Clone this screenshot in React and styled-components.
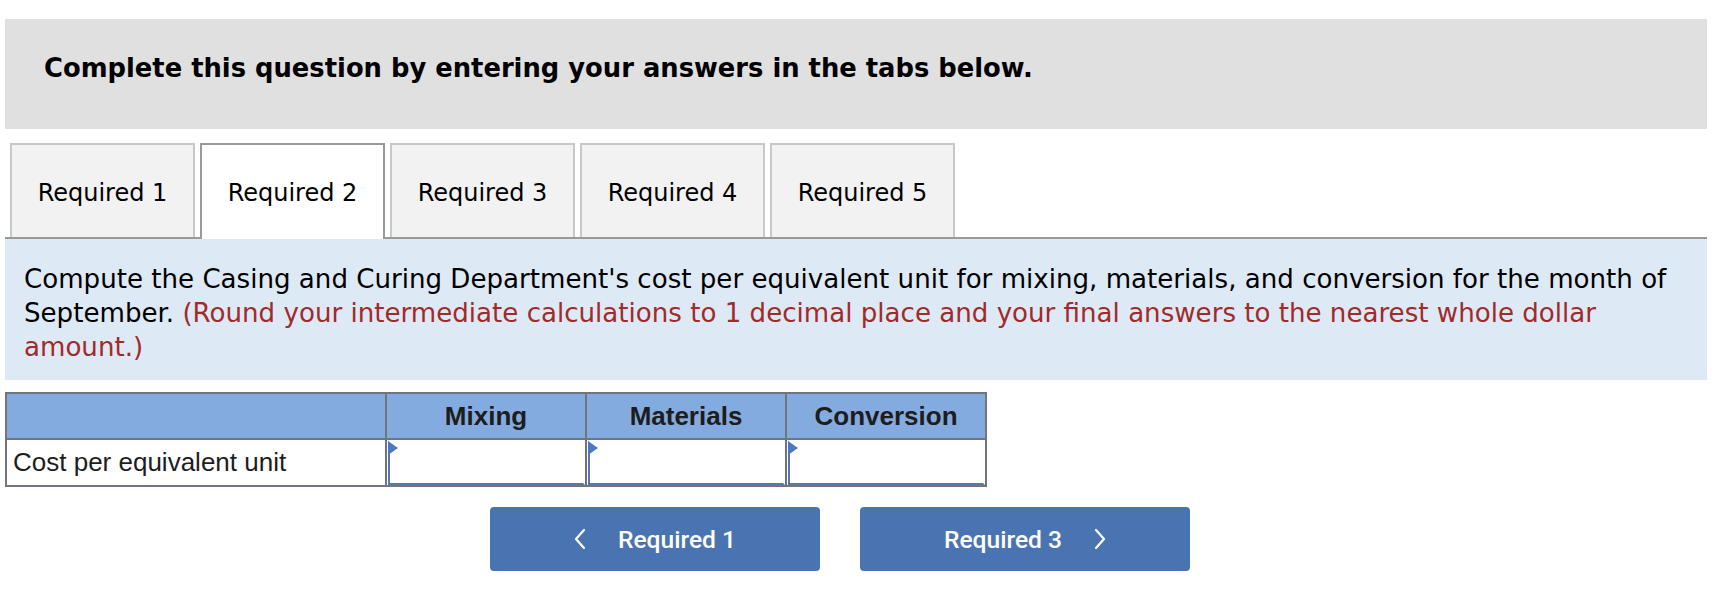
import React from "react";
import styled, { createGlobalStyle } from "styled-components";

const GlobalStyle = createGlobalStyle`
  html, body {
    margin: 0;
    padding: 0;
    background: #ffffff;
  }
  body {
    font-family: "DejaVu Sans", Verdana, sans-serif;
    color: #000;
  }
`;

const tabs = ["Required 1", "Required 2", "Required 3", "Required 4", "Required 5"];
const columns = ["Mixing", "Materials", "Conversion"];

const Page = styled.div`
  padding: 19px 8px 20px 5px;
`;

const Banner = styled.div`
  height: 110px;
  box-sizing: border-box;
  padding: 33px 39px 0;
  background: #e0e0e0;
  font-size: 25.8px;
  font-weight: bold;
  line-height: 32px;
`;

const TabBar = styled.div`
  margin-top: 14px;
  display: flex;
  align-items: flex-end;
  gap: 5px;
  padding-left: 5px;
  border-bottom: 2px solid #999999;
`;

const Tab = styled.div`
  width: 185px;
  height: ${(p) => (p.$active ? "96px" : "94px")};
  margin-bottom: ${(p) => (p.$active ? "-2px" : "0")};
  box-sizing: border-box;
  display: flex;
  align-items: center;
  justify-content: center;
  padding: 4px 0 ${(p) => (p.$active ? "2px" : "0")};
  background: ${(p) => (p.$active ? "#ffffff" : "#f2f2f2")};
  border: 2px solid ${(p) => (p.$active ? "#999999" : "#c8c8c8")};
  border-bottom: none;
  font-size: 24px;
  color: #000;
`;

const Instructions = styled.div`
  background: #dee9f6;
  padding: 23px 19px 16px;
  font-size: 26.1px;
  line-height: 34px;
`;

const Hint = styled.span`
  color: #a02b2b;
`;

const Grid = styled.table`
  margin-top: 12px;
  border-collapse: collapse;
  border: 2px solid #6f7681;
  font-family: "Liberation Sans", Arial, sans-serif;
`;

const HeadCell = styled.th`
  height: 44px;
  width: ${(p) => (p.$wide ? "378px" : "198px")};
  padding: 0;
  background: #84abe0;
  border: 2px solid #6f7681;
  font-size: 26px;
  font-weight: bold;
  color: #1d1d1d;
`;

const LabelCell = styled.td`
  height: 45px;
  padding: 0 6px;
  border: 2px solid #6f7681;
  font-size: 26px;
  color: #1d1d1d;
`;

const InputCell = styled.td`
  position: relative;
  padding: 1px 0 0 1px;
  border: 2px solid #6f7681;
  background: #ffffff;
`;

const AnswerBox = styled.input`
  display: block;
  width: 100%;
  height: 44px;
  box-sizing: border-box;
  margin: 0;
  border: 2px solid #5b77a4;
  border-top-color: #ffffff;
  border-right-color: #ffffff;
  background: #ffffff;
  outline: none;
  font-size: 22px;
`;

const Marker = styled.span`
  position: absolute;
  left: 1px;
  top: 1px;
  width: 0;
  height: 0;
  border-top: 7px solid transparent;
  border-bottom: 7px solid transparent;
  border-left: 10px solid #4a79c2;
`;

const NavRow = styled.div`
  margin-top: 20px;
  display: flex;
  gap: 40px;
  padding-left: 485px;
`;

const NavButton = styled.button`
  width: 330px;
  height: 64px;
  display: flex;
  align-items: center;
  justify-content: center;
  gap: 32px;
  border: none;
  border-radius: 4px;
  background: #4a74b1;
  color: #ffffff;
  font-family: Roboto, "Liberation Sans", sans-serif;
  font-size: 24.6px;
  font-weight: 500;
  cursor: pointer;
`;

const Chevron = ({ dir }) => (
  <svg width="12" height="22" viewBox="0 0 12 22" fill="none">
    <polyline
      points={dir === "left" ? "10,2 2,11 10,20" : "2,2 10,11 2,20"}
      stroke="#ffffff"
      strokeWidth="2.2"
      strokeLinecap="round"
      strokeLinejoin="round"
    />
  </svg>
);

export default function App() {
  return (
    <Page>
      <GlobalStyle />
      <Banner>Complete this question by entering your answers in the tabs below.</Banner>

      <TabBar>
        {tabs.map((t, i) => (
          <Tab key={t} $active={i === 1}>
            {t}
          </Tab>
        ))}
      </TabBar>

      <Instructions>
        Compute the Casing and Curing Department's cost per equivalent unit for mixing, materials, and
        conversion for the month of September.{" "}
        <Hint>
          (Round your intermediate calculations to 1 decimal place and your final answers to the nearest
          whole dollar amount.)
        </Hint>
      </Instructions>

      <Grid>
        <thead>
          <tr>
            <HeadCell $wide />
            {columns.map((c) => (
              <HeadCell key={c}>{c}</HeadCell>
            ))}
          </tr>
        </thead>
        <tbody>
          <tr>
            <LabelCell>Cost per equivalent unit</LabelCell>
            {columns.map((c) => (
              <InputCell key={c}>
                <AnswerBox type="text" aria-label={c} />
                <Marker />
              </InputCell>
            ))}
          </tr>
        </tbody>
      </Grid>

      <NavRow>
        <NavButton>
          <Chevron dir="left" />
          <span>Required 1</span>
        </NavButton>
        <NavButton>
          <span>Required 3</span>
          <Chevron dir="right" />
        </NavButton>
      </NavRow>
    </Page>
  );
}
